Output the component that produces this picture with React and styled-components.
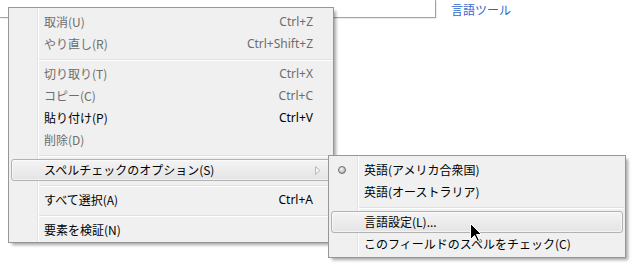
import React from "react";
import styled, { createGlobalStyle } from "styled-components";

const GlobalStyle = createGlobalStyle`
  html, body {
    margin: 0;
    padding: 0;
    background: #fff;
  }
  body {
    font-family: "Noto Sans CJK JP", "Noto Sans", sans-serif;
    font-size: 12px;
    color: #000;
  }
`;

const Page = styled.div`
  position: relative;
  width: 633px;
  height: 265px;
  overflow: hidden;
  background: #fff;
`;

const TopRow = styled.div`
  display: flex;
  align-items: flex-start;
`;

const SearchBox = styled.div`
  width: 436px;
  height: 18px;
  box-sizing: border-box;
  border-right: 1px solid #a4a4a4;
  border-bottom: 1px solid #a4a4a4;
  box-shadow: 1px 1px 0 #ececec;
`;

const LangLink = styled.a`
  margin: 3px 0 0 15px;
  line-height: 14px;
  font-size: 12px;
  color: #3366cc;
  text-decoration: none;
  cursor: pointer;
`;

const Menu = styled.div`
  position: absolute;
  top: ${(p) => p.top}px;
  left: ${(p) => p.left}px;
  width: ${(p) => p.width}px;
  box-sizing: border-box;
  padding: 3px 0 ${(p) => p.padBottom}px;
  border: 1px solid #979797;
  background:
    linear-gradient(
      to right,
      transparent 28px,
      #e2e3e3 28px,
      #e2e3e3 29px,
      #ffffff 29px,
      #ffffff 30px,
      transparent 30px
    ),
    #f0f0f0;
  box-shadow: 3px 3px 3px -1px rgba(0, 0, 0, 0.35);
  z-index: ${(p) => p.z};
`;

const Item = styled.div`
  display: grid;
  grid-template-columns: 32px 1fr auto 17px;
  align-items: center;
  height: 22px;
  margin: 0 2px;
  box-sizing: border-box;
  line-height: 22px;
  white-space: nowrap;
  color: ${(p) => (p.disabled ? "#6d6d6d" : "#000")};
  border-radius: 3px;
  border: 1px solid ${(p) => (p.active ? "#b2b2b2" : "transparent")};
  background: ${(p) =>
    p.active ? "linear-gradient(#f4f4f4, #e4e4e4)" : "transparent"};
  box-shadow: ${(p) =>
    p.active ? "inset 0 0 0 1px rgba(255,255,255,0.55)" : "none"};
`;

const Label = styled.span`
  line-height: 20px;
`;

const Shortcut = styled.span`
  line-height: 20px;
  text-align: right;
  font-family: "Noto Sans", "Noto Sans CJK JP", sans-serif;
`;

const IconSlot = styled.span`
  display: flex;
  align-items: center;
  justify-content: flex-start;
  padding-left: 6px;
`;

const Radio = styled.span`
  width: 8px;
  height: 8px;
  border-radius: 50%;
  box-sizing: border-box;
  border: 1px solid #6a6a6a;
  background: radial-gradient(circle at 40% 35%, #f6f6f6, #b5b5b5 75%);
`;

const Arrow = styled.span`
  display: flex;
  align-items: center;
  padding-left: 2px;
`;

const Separator = styled.div`
  height: 0;
  margin: 4px 1px 2px 30px;
  border-top: 1px solid #e0e0e0;
  border-bottom: 1px solid #ffffff;
`;

const Cursor = styled.svg`
  position: absolute;
  left: 470px;
  top: 223px;
  z-index: 5;
`;

function MenuItem({ label, shortcut, disabled, active, radio, submenu }) {
  return (
    <Item disabled={disabled} active={active}>
      <IconSlot>{radio && <Radio />}</IconSlot>
      <Label>{label}</Label>
      <Shortcut>{shortcut}</Shortcut>
      <Arrow>
        {submenu && (
          <svg width="6" height="9" viewBox="0 0 6 9">
            <path d="M0.5 0.5 L5 4.5 L0.5 8.5 Z" fill="#f4f4f4" stroke="#b9b9b9" />
          </svg>
        )}
      </Arrow>
    </Item>
  );
}

export default function App() {
  return (
    <>
      <GlobalStyle />
      <Page>
        <TopRow>
          <SearchBox />
          <LangLink>言語ツール</LangLink>
        </TopRow>

        <Menu top={7} left={8} width={326} padBottom={1} z={2}>
          <MenuItem label="取消(U)" shortcut="Ctrl+Z" disabled />
          <MenuItem label="やり直し(R)" shortcut="Ctrl+Shift+Z" disabled />
          <Separator />
          <MenuItem label="切り取り(T)" shortcut="Ctrl+X" disabled />
          <MenuItem label="コピー(C)" shortcut="Ctrl+C" disabled />
          <MenuItem label="貼り付け(P)" shortcut="Ctrl+V" />
          <MenuItem label="削除(D)" disabled />
          <Separator />
          <MenuItem label="スペルチェックのオプション(S)" active submenu />
          <Separator />
          <MenuItem label="すべて選択(A)" shortcut="Ctrl+A" />
          <Separator />
          <MenuItem label="要素を検証(N)" />
        </Menu>

        <Menu top={155} left={328} width={298} padBottom={2} z={3}>
          <MenuItem label="英語(アメリカ合衆国)" radio />
          <MenuItem label="英語(オーストラリア)" />
          <Separator />
          <MenuItem label="言語設定(L)..." active />
          <MenuItem label="このフィールドのスペルをチェック(C)" />
        </Menu>

        <Cursor width="13" height="20" viewBox="0 0 13 20">
          <path
            d="M0.5 0.5 L0.5 16.5 L4.5 12.5 L7.5 18.5 L9.5 17.5 L6.5 11.5 L11.5 11.5 Z"
            fill="#000"
            stroke="#fff"
            strokeWidth="1"
            strokeLinejoin="miter"
          />
        </Cursor>
      </Page>
    </>
  );
}
